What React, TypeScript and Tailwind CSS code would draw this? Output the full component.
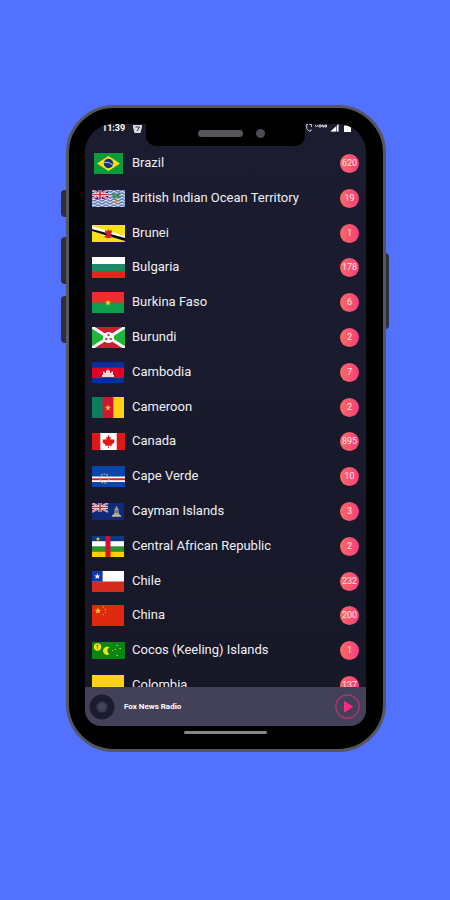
import type { ReactNode } from 'react';

type Country = {
  name: string;
  stations: number;
  ratio: 'tall' | 'wide';
  flag: ReactNode;
};

const UnionJack = () => (
  <g>
    <rect width="16" height="9" fill="#1b2a80" />
    <path d="M0 0l16 9M16 0L0 9" stroke="#fff" strokeWidth="2" />
    <path d="M0 0l16 9M16 0L0 9" stroke="#d8283c" strokeWidth="0.8" />
    <path d="M8 0v9M0 4.5h16" stroke="#fff" strokeWidth="3" />
    <path d="M8 0v9M0 4.5h16" stroke="#d8283c" strokeWidth="1.7" />
  </g>
);

const countries: Country[] = [
  {
    name: 'Brazil',
    stations: 620,
    ratio: 'tall',
    flag: (
      <>
        <rect x="2" width="29" height="21" fill="#0b9b3e" />
        <path d="M16.500 3L28 10.500 16.500 18 5 10.500z" fill="#fbe116" />
        <circle cx="16.500" cy="10.500" r="4.700" fill="#15317f" />
        <path d="M12.200 9.500q5-1 8.600 2.500" stroke="#c8d5e8" strokeWidth="0.900" fill="none" />
      </>
    ),
  },
  {
    name: 'British Indian Ocean Territory',
    stations: 19,
    ratio: 'wide',
    flag: (
      <>
        <rect width="33" height="17" fill="#dde3f0" />
        {[1, 4, 7, 10, 13, 16].map((y) => (
          <path
            key={y}
            d={`M0 ${y}q2 2 4 0t4 0 4 0 4 0 4 0 4 0 4 0 4 0 4 0`}
            stroke="#5f78b4"
            strokeWidth="1.300"
            fill="none"
          />
        ))}
        <UnionJack />
        <path d="M20 4l4 2 4-3M24 6l-3 2M25 6l4 1" stroke="#259052" strokeWidth="1.800" fill="none" />
        <path d="M24 6v8" stroke="#ad854c" strokeWidth="1" />
        <circle cx="24" cy="12" r="1.700" fill="#d8923f" />
      </>
    ),
  },
  {
    name: 'Brunei',
    stations: 1,
    ratio: 'wide',
    flag: (
      <>
        <rect width="33" height="17" fill="#f7e017" />
        <path d="M0 1l33 10v5L0 5z" fill="#fff" />
        <path d="M0 4l33 9v3L0 6z" fill="#050505" />
        <path d="M16.500 4l1.200 2 2-1q.6 4-1.700 4.500l3 2.500q-4.500 1.800-9 0l3-2.500q-2.300-.5-1.700-4.500l2 1z" fill="#cf1f2c" />
      </>
    ),
  },
  {
    name: 'Bulgaria',
    stations: 178,
    ratio: 'tall',
    flag: (
      <>
        <rect width="33" height="7" fill="#fff" />
        <rect y="7" width="33" height="7" fill="#168c68" />
        <rect y="14" width="33" height="7" fill="#d92b1e" />
      </>
    ),
  },
  {
    name: 'Burkina Faso',
    stations: 6,
    ratio: 'tall',
    flag: (
      <>
        <rect width="32" height="11" fill="#ef2b2d" />
        <rect y="10.500" width="32" height="10.500" fill="#0c9f4b" />
        <path d="M16 7.500l.8 2.300h2.300l-1.900 1.500.8 2.300-2-1.400-2 1.400.8-2.300-1.900-1.500h2.300z" fill="#fcd116" />
      </>
    ),
  },
  {
    name: 'Burundi',
    stations: 2,
    ratio: 'tall',
    flag: (
      <>
        <rect width="33" height="21" fill="#1eb53a" />
        <path d="M0 0h33L16.500 10.500zM0 21h33L16.500 10.500z" fill="#cf1c2e" />
        <path d="M0 0l33 21M33 0L0 21" stroke="#fff" strokeWidth="3" />
        <circle cx="16.500" cy="10.500" r="5.500" fill="#fff" />
        <circle cx="16.500" cy="8" r="1.200" fill="#cf3c4e" />
        <circle cx="14.300" cy="12" r="1.200" fill="#cf3c4e" />
        <circle cx="18.700" cy="12" r="1.200" fill="#cf3c4e" />
      </>
    ),
  },
  {
    name: 'Cambodia',
    stations: 7,
    ratio: 'tall',
    flag: (
      <>
        <rect width="32" height="21" fill="#032ea1" />
        <rect y="5.500" width="32" height="10.500" fill="#e00025" />
        <path d="M10 15v-2h1v-3l1-1 1 2h1V8l1 1 1-2 1 2 1-1v3h1l1-2 1 1v3h1v2z" fill="#f1e6e4" />
        <path d="M13 12v3M16 10v5M19 12v3" stroke="#b4a3a7" strokeWidth="0.600" />
      </>
    ),
  },
  {
    name: 'Cameroon',
    stations: 2,
    ratio: 'tall',
    flag: (
      <>
        <rect width="11" height="21" fill="#0a7f5e" />
        <rect x="10.600" width="10.800" height="21" fill="#ce1730" />
        <rect x="21.300" width="10.700" height="21" fill="#fcd116" />
        <path d="M16 7.500l.8 2.300h2.300l-1.900 1.500.8 2.300-2-1.400-2 1.400.8-2.300-1.900-1.500h2.300z" fill="#fcc12a" />
      </>
    ),
  },
  {
    name: 'Canada',
    stations: 895,
    ratio: 'wide',
    flag: (
      <>
        <rect width="33" height="17" fill="#fff" />
        <rect width="8.300" height="17" fill="#e01719" />
        <rect x="24.700" width="8.300" height="17" fill="#e01719" />
        <path
          d="M16.500 2l1.300 2.500 1.200-.6-.6 3.400 1.700-1.600.4 1 2.100-.3-.7 2 .9.600-3.300 2.700.3 1.200-3-.4.100 2.800h-.8l.1-2.800-3 .4.300-1.200-3.300-2.700.9-.6-.7-2 2.100.3.400-1 1.700 1.600-.6-3.400 1.200.6z"
          fill="#e01719"
        />
      </>
    ),
  },
  {
    name: 'Cape Verde',
    stations: 10,
    ratio: 'tall',
    flag: (
      <>
        <rect width="33" height="21" fill="#0845ad" />
        <rect y="10.500" width="33" height="5.500" fill="#fff" />
        <rect y="12.300" width="33" height="1.900" fill="#cf2027" />
        <circle cx="12.500" cy="12.500" r="4.500" fill="none" stroke="#c5b96a" strokeWidth="1.200" strokeDasharray="1.800 1" />
      </>
    ),
  },
  {
    name: 'Cayman Islands',
    stations: 3,
    ratio: 'wide',
    flag: (
      <>
        <rect width="32" height="17" fill="#10297a" />
        <UnionJack />
        <path d="M24.500 3l2 3v4l3 3.500h-10l3-3.500V6z" fill="#a9a999" />
        <path d="M23 7h3v3h-3z" fill="#4a86a0" />
        <path d="M23 5h3" stroke="#b8423c" strokeWidth="1" />
        <path d="M20 13h9" stroke="#dfc87e" strokeWidth="1" />
      </>
    ),
  },
  {
    name: 'Central African Republic',
    stations: 2,
    ratio: 'tall',
    flag: (
      <>
        <rect width="32" height="6" fill="#0b3a84" />
        <rect y="5.200" width="32" height="5.500" fill="#fff" />
        <rect y="10.500" width="32" height="5.300" fill="#289728" />
        <rect y="15.700" width="32" height="5.300" fill="#ffce00" />
        <rect x="13.500" width="5" height="21" fill="#d21034" />
        <path d="M6 1l.6 1.300H8l-1 1 .4 1.400L6 3.900l-1.400.8.4-1.400-1-1h1.400z" fill="#ffce00" />
      </>
    ),
  },
  {
    name: 'Chile',
    stations: 232,
    ratio: 'tall',
    flag: (
      <>
        <rect width="32" height="11" fill="#fff" />
        <rect y="10.500" width="32" height="10.500" fill="#d52b1e" />
        <rect width="10.600" height="10.600" fill="#0b39a6" />
        <path d="M5.300 2.300l.8 2.100h2.200L6.600 5.800l.6 2.200-1.900-1.300L3.400 8 4 5.800 2.300 4.400h2.200z" fill="#fff" />
      </>
    ),
  },
  {
    name: 'China',
    stations: 200,
    ratio: 'tall',
    flag: (
      <>
        <rect width="32" height="21" fill="#de2910" />
        <path d="M6 2.500l.9 2.200h2.300L7.400 6.200l.7 2.300L6 7.200 3.900 8.500l.7-2.300-1.800-1.500h2.300z" fill="#ffce1a" />
        <path d="M10.500 1.500l1.500 1M12.500 4l1.500.6M12.700 7.500l1.300-.6M10.500 10l1.500-1" stroke="#f5a518" strokeWidth="1" />
      </>
    ),
  },
  {
    name: 'Cocos (Keeling) Islands',
    stations: 1,
    ratio: 'wide',
    flag: (
      <>
        <rect width="33" height="17" fill="#078614" />
        <circle cx="5.500" cy="5" r="3.700" fill="#f4e01c" />
        <path d="M5.500 2.500v4.500M4 4q1.500-1.500 3 0" stroke="#739a12" strokeWidth="0.900" fill="none" />
        <path d="M17.500 5.500a4 4 0 1 0 0 6.500 3.500 3.500 0 0 1 0-6.500z" fill="#f4e01c" />
        <path d="M20 8.500h1.200M24.500 3.500h1.500M27.500 6.500H29M24.500 13.500h1.500M23 7.500h1" stroke="#d8d61b" strokeWidth="1.200" />
      </>
    ),
  },
  {
    name: 'Colombia',
    stations: 137,
    ratio: 'tall',
    flag: (
      <>
        <rect width="32" height="13" fill="#fcd116" />
        <rect y="12.500" width="32" height="4" fill="#003893" />
        <rect y="16.500" width="32" height="4.500" fill="#ce1126" />
      </>
    ),
  },
];

function StatusBar() {
  return (
    <header className="flex h-[22px] items-start justify-between">
      <div className="flex w-[61px] shrink-0 items-center gap-2 pl-[17px] text-[9px] leading-[9px] font-bold text-white">
        <span>11:39</span>
        <svg viewBox="0 0 9 8" className="h-2 w-[9px] shrink-0" aria-hidden="true">
          <path d="M0 0h9v2L7.500 8h-6L0 2z" fill="#dcdce4" />
          <path d="M2.500 2h4l-2.500 4" stroke="#34344a" strokeWidth="1" fill="none" />
        </svg>
      </div>
      <div className="-mt-1 flex h-[26px] flex-1 items-center justify-center gap-[13px] rounded-b-[10px] bg-black pl-[12px]">
        <span className="h-[7px] w-[45px] rounded-full bg-[#55545b]" />
        <span className="h-[9px] w-[9px] rounded-full bg-[#4d4c54]" />
      </div>
      <div className="flex w-[61px] shrink-0 items-start gap-[3px] pl-px text-white">
        <svg viewBox="0 0 6 8" className="h-2 w-1.5" aria-hidden="true">
          <path d="M2 .5H.7v4L3 7h2V5.500M3.500.5h2v2.500" stroke="#c4c4d0" fill="none" />
        </svg>
        <svg viewBox="0 0 12 4" className="h-1 w-3" aria-hidden="true">
          <path d="M0 1l1.500 2L3 1M4 1v2h2V1zM7 3V1h1v2h1V1M10 1v2h1.500V1z" stroke="#e0e0e8" strokeWidth="0.900" fill="none" />
        </svg>
        <svg viewBox="0 0 9 8" className="h-2 w-[9px]" aria-hidden="true">
          <path d="M8.500 0v7.500H.5z" fill="#77778a" />
          <path d="M6 2.500v5H.5zM7 1.500l1.500-1.500v7.500H7z" fill="#fff" />
        </svg>
        <svg viewBox="0 0 7 8" className="ml-0.5 h-2 w-[7px]" aria-hidden="true">
          <path d="M0 1.500h2V0h3v1.500h2V8H0z" fill="#fff" />
        </svg>
      </div>
    </header>
  );
}

function CountryRow({ country }: { country: Country }) {
  const isTall = country.ratio === 'tall';

  return (
    <li className="flex items-center px-[7px]">
      <svg
        viewBox={isTall ? '0 0 33 21' : '0 0 33 17'}
        className={isTall ? 'h-[21px] w-[33px] shrink-0' : 'h-[17px] w-[33px] shrink-0'}
        aria-hidden="true"
      >
        {country.flag}
      </svg>
      <span className="ml-[7px] flex-1 truncate pb-px text-[13px] leading-4 text-[#f0f0f4]">{country.name}</span>
      <span className="flex h-[19px] w-[19px] shrink-0 items-center justify-center rounded-full bg-linear-to-r from-[#fb6a60] to-[#f83a7d] text-[9px] leading-none text-[#ffe4ea]">
        {country.stations}
      </span>
    </li>
  );
}

function PlayerBar() {
  return (
    <footer className="flex h-[39px] items-center bg-[#434159] pr-1.5 pl-1">
      <svg viewBox="0 0 26 26" className="h-[26px] w-[26px]" aria-hidden="true">
        <circle cx="13" cy="13" r="12.500" fill="#1c1b30" />
        <circle cx="13" cy="13" r="5.500" fill="#3b3a51" />
        <circle cx="13" cy="13" r="3.500" fill="#45445b" />
      </svg>
      <span className="ml-[9px] flex-1 text-[8px] leading-none font-bold text-white">Fox News Radio</span>
      <button type="button" aria-label="Play" className="h-[25px] w-[25px]">
        <svg viewBox="0 0 25 25" aria-hidden="true">
          <circle cx="12.500" cy="12.500" r="11.700" fill="none" stroke="#b93672" strokeWidth="1.200" />
          <path d="M9.500 7.500v10.500l8-5.200z" fill="#fc2b84" stroke="#fc2b84" strokeLinejoin="round" />
        </svg>
      </button>
    </footer>
  );
}

export default function App() {
  return (
    <main className="min-h-screen bg-[#5271ff] px-4 pt-[105px] pb-10 font-[Roboto,sans-serif]">
      <div className="relative left-px mx-auto w-full max-w-[320px]">
        <span className="absolute top-[85px] -left-[5px] h-[27px] w-[6px] rounded-l-sm bg-[#2d303b]" />
        <span className="absolute top-[132px] -left-[5px] h-[47px] w-[6px] rounded-l-sm bg-[#2d303b]" />
        <span className="absolute top-[191px] -left-[5px] h-[47px] w-[6px] rounded-l-sm bg-[#2d303b]" />
        <span className="absolute top-[148px] -right-[3px] h-[76px] w-[6px] rounded-r-sm bg-[#2d303b]" />

        <div className="relative rounded-[48px] border-[3px] border-[#55565f] bg-black pt-4 pr-[17px] pl-4">
          <div className="overflow-hidden rounded-t-[28px] rounded-b-[16px] bg-linear-to-b from-[#1c1c31] to-[#161727]">
            <StatusBar />
            <div className="h-[541px] overflow-hidden">
              <ul className="grid h-[557px] auto-rows-fr">
                {countries.map((country) => (
                  <CountryRow key={country.name} country={country} />
                ))}
              </ul>
            </div>
            <PlayerBar />
          </div>
          <div className="flex h-[23px] justify-center pt-[5px]">
            <span className="h-[3px] w-[83px] rounded-full bg-[#85858a]" />
          </div>
        </div>
      </div>
    </main>
  );
}
